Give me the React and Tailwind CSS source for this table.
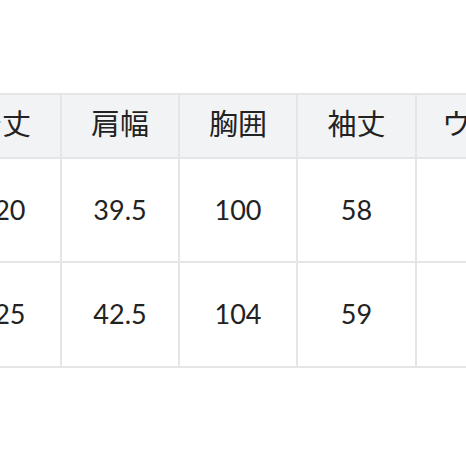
import React from "react";

const widths = ["w-[118px]", "w-[118px]", "w-[118px]", "w-[119px]", "w-[168px]"];
const header = ["着丈", "肩幅", "胸囲", "袖丈", "ウエスト"];
const rows = [
  ["120", "39.5", "100", "58", ""],
  ["125", "42.5", "104", "59", ""],
];

export default function App() {
  return (
    <div
      className="w-[466px] h-[466px] bg-white overflow-hidden pt-[93px] text-[#222222]"
      style={{ fontFamily: '"Lato", "Noto Sans CJK JP", sans-serif' }}
    >
      <div className="ml-[-58px] w-max border-t-2 border-l-2 border-[#e4e5e7]">
        <div className="flex h-[64px] bg-[#f2f3f5]">
          {header.map((h, i) => (
            <div
              key={i}
              className={`${widths[i]} shrink-0 h-full flex items-center justify-center border-r-2 border-b-2 border-[#e4e5e7] text-[29px] pb-[4px]`}
            >
              {h}
            </div>
          ))}
        </div>
        {rows.map((r, ri) => (
          <div key={ri} className={`flex ${ri === 0 ? "h-[104px]" : "h-[105px]"} bg-white`}>
            {r.map((c, i) => (
              <div
                key={i}
                className={`${widths[i]} shrink-0 h-full flex items-center justify-center border-r-2 border-b-2 border-[#e4e5e7] text-[27px]`}
              >
                {c}
              </div>
            ))}
          </div>
        ))}
      </div>
    </div>
  );
}
